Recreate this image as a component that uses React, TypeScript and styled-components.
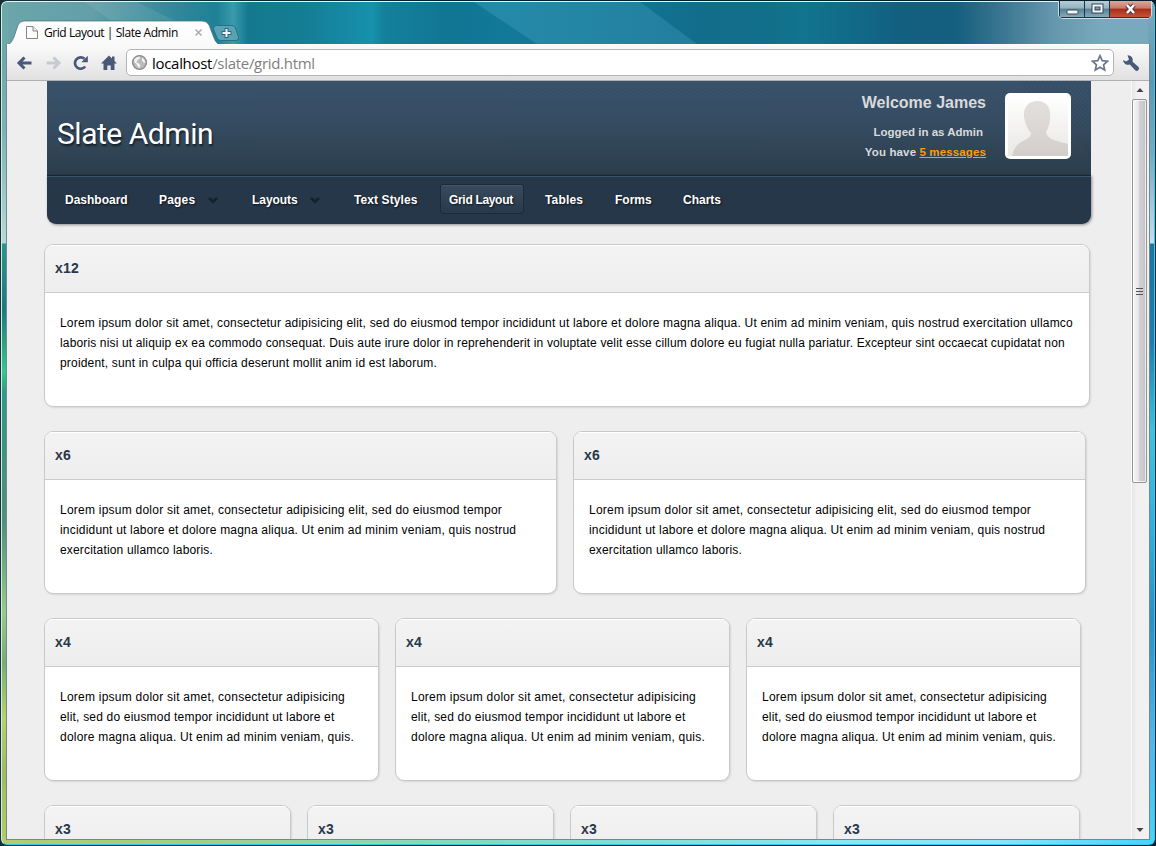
import React from "react";
import styled, { createGlobalStyle, css } from "styled-components";

const GlobalStyle = createGlobalStyle`
  * { box-sizing: border-box; }
  body { margin: 0; background: #06222c; overflow: hidden; }
`;

const Desktop = styled.div`
  width: 1156px;
  height: 846px;
  padding: 1px;
  background: linear-gradient(90deg, #12303a, #04202e 40%, #04202e);
  font-family: "Liberation Sans", Arial, sans-serif;
`;

const WindowFrame = styled.div`
  display: flex;
  flex-direction: column;
  height: 844px;
  padding: 0 5px 5px;
  border: 1px solid;
  border-color: #e4f6fa #27cdf2 #2fcdee #d6eee6;
  border-radius: 6px;
  background:
    linear-gradient(90deg, #b0ce68 0%, #a2d080 18%, #8fd8a8 32%, #86dcc8 50%, #8fe6f0 75%, #8ce2f8 87%, #45d6f2 100%) 0 100% / 100% 7px no-repeat,
    linear-gradient(180deg, #6ca8a8 0, #6eaaa8 60px, #7db4b2 130px, #b8d8d8 241px, #2a958a 242px, #1b7a7c 308px, #35c888 370px, #2f9a88 390px, #3c9480 440px, #4f9078 520px, #98cc86 610px, #78ad70 660px, #b8d268 715px, #a4ba5c 770px, #b4ce62 842px) 0 0 / 6px 100% no-repeat,
    linear-gradient(180deg, #7caabd 0, #5d9ab2 80px, #74aabf 150px, #c4e0ec 241px, #1d74a0 242px, #1f7dad 340px, #3cc4d8 430px, #34b0dc 520px, #2a90c8 620px, #55b4ec 740px, #45d6f2 842px) 100% 0 / 6px 100% no-repeat,
    linear-gradient(90deg, #6ca6aa 0, #629fa8 90px, #4a93a1 130px, #31879a 175px, #1f8097 215px, #3a9bae 231px, #14798f 246px, #147d93 300px, #168aa6 350px, #1592ad 370px, #14809a 383px, #117594 450px, #127998 500px, #127392 640px, #126d8b 700px, #126f8a 770px, #12748e 800px, #116a88 850px, #135f80 900px, #155f80 955px, #3a7690 1000px, #6496ad 1050px, #79a9bc 1100px);
`;

const TitleBar = styled.div`
  position: relative;
  display: flex;
  flex: 0 0 42px;
  align-items: flex-end;
`;

const Streaks = styled.svg`
  position: absolute;
  left: 0;
  top: 0;
`;

const Tab = styled.div`
  position: relative;
  display: flex;
  align-items: center;
  width: 210px;
  height: 25px;
  margin: 0 0 -1px 1px;
  padding: 0 15px 0 17px;
  font: 12px/24px "Open Sans", sans-serif;
  color: #000;
`;

const TabShape = styled.svg`
  position: absolute;
  left: 0;
  top: 0;
`;

const TabTitle = styled.span`
  position: relative;
  flex: 1;
  margin-left: 5px;
  letter-spacing: -0.43px;
  white-space: nowrap;
`;

const RelIcon = styled.svg`
  position: relative;
  flex: none;
`;

const NewTab = styled.svg`
  position: relative;
  flex: none;
  margin: 0 0 3px -6px;
`;

const WindowButtons = styled.div`
  position: absolute;
  right: -3px;
  top: -1px;
  display: flex;
  height: 18px;
  border: 1px solid #c9dde6;
  border-top: 0;
  border-radius: 0 0 5px 5px;
  overflow: hidden;
`;

const WindowButton = styled.div<{ $w: number; $danger?: boolean }>`
  display: flex;
  align-items: center;
  justify-content: center;
  width: ${p => p.$w}px;
  border-left: 1px solid #1d3442;
  border-bottom: 1px solid #1d3442;
  background: ${p =>
    p.$danger
      ? "linear-gradient(180deg, #dca79c 0, #c8796b 45%, #a92d16 50%, #c4543a 100%)"
      : "linear-gradient(180deg, #b8cdd6 0, #93b2bf 45%, #557f92 50%, #86abb9 100%)"};
`;

const BrowserWindow = styled.div`
  display: flex;
  flex-direction: column;
  flex: 1;
  min-height: 0;
  border: 1px solid #6f8a90;
  border-top: 0;
  margin: 0 -1px -1px -1px;
`;

const Toolbar = styled.div`
  display: flex;
  flex: 0 0 37px;
  align-items: center;
  padding: 0 8px 0 9px;
  border-top: 1px solid #fff;
  border-bottom: 1px solid #aeb0b4;
  background: linear-gradient(180deg, #fafafa, #e1e1e2);
`;

const NavIcon = styled.svg`
  flex: none;
  width: 18px;
  height: 18px;
  margin-right: 10px;
`;

const AddressBar = styled.div`
  display: flex;
  align-items: center;
  width: 988px;
  height: 27px;
  margin: 0 8px 0 -2px;
  padding: 0 4px;
  border: 1px solid #b3b4b8;
  border-radius: 5px;
  background: #fff;
`;

const Url = styled.span`
  flex: 1;
  margin-left: 4px;
  font: 15px/24px "Open Sans", sans-serif;
  letter-spacing: -0.3px;
  color: #000;
  span { color: #808080; }
`;

const Viewport = styled.div`
  display: flex;
  flex: 1;
  min-height: 0;
  background: #eee;
`;

const Page = styled.div`
  flex: 1;
  min-width: 0;
  padding-left: 37px;
  overflow: hidden;
`;

const Header = styled.header`
  width: 1044px;
  height: 143px;
  margin-left: 3px;
`;

const Banner = styled.div`
  display: flex;
  height: 94px;
  padding: 0 20px 0 10px;
  background:
    repeating-linear-gradient(45deg, rgba(10, 25, 40, 0.1) 0 1px, transparent 1px 2.83px),
    linear-gradient(180deg, #3a546d 0, #364c61 50%, #2b3e4c 100%);
`;

const Logo = styled.h1`
  flex: 1;
  margin: 33px 0 0;
  font: 400 30px/40px Roboto, sans-serif;
  letter-spacing: -0.47px;
  color: #fff;
  text-shadow: 1px 2px 2px rgba(0, 0, 0, 0.6);
`;

const Account = styled.div`
  display: flex;
  flex-direction: column;
  align-items: flex-end;
  margin: 12px 19px 0 0;
  font-weight: bold;
  font-size: 11.5px;
  line-height: 20px;
  color: #d8dadc;
`;

const Welcome = styled.strong`
  margin-bottom: 10px;
  font-size: 16px;
  line-height: 19px;
`;

const AccountLine = styled.span<{ $inset?: number; $spacing: number }>`
  margin-right: ${p => p.$inset || 0}px;
  letter-spacing: ${p => p.$spacing}px;
  a { color: #ff9a0a; text-decoration: underline; }
`;

const Avatar = styled.svg`
  flex: none;
  margin-top: 12px;
`;

const NavBar = styled.nav`
  display: flex;
  height: 49px;
  padding: 8px 9px 0;
  border-top: 1px solid #15242f;
  border-radius: 0 0 9px 9px;
  background: #27374a;
  box-shadow: inset 0 1px 0 #3a536b, 1px 1px 3px rgba(0, 0, 0, 0.4);
`;

const NavItem = styled.a<{ $w: number; $gap: number; $spacing?: number; $active?: boolean }>`
  display: flex;
  align-items: center;
  justify-content: space-between;
  width: ${p => p.$w}px;
  height: 30px;
  margin-right: ${p => p.$gap}px;
  padding: 2px 8px 0;
  border: 1px solid transparent;
  border-radius: 3px;
  font-weight: bold;
  font-size: 12px;
  letter-spacing: ${p => p.$spacing || 0}px;
  color: #fff;
  text-shadow: 1px 1px 2px rgba(0, 0, 0, 0.7);
  white-space: nowrap;
  ${p =>
    p.$active &&
    css`
      border-color: #1b2b3b;
      background: linear-gradient(180deg, #3a4b5d, #28394c);
      box-shadow: inset 0 1px 0 #435466;
    `}
`;

const MenuArrow = styled.svg`
  margin-right: 2px;
`;

const Grid = styled.main`
  display: flex;
  flex-direction: column;
  gap: 24px;
  margin-top: 20px;
`;

const Row = styled.div`
  display: flex;
  gap: 16px;
`;

const Card = styled.section<{ $w: number }>`
  flex: none;
  width: ${p => p.$w}px;
  height: 163px;
  border: 1px solid #c9c9c9;
  border-radius: 9px;
  background: #fff;
  box-shadow: 1px 1px 2px rgba(0, 0, 0, 0.1);
  overflow: hidden;
`;

const CardTitle = styled.h2`
  height: 48px;
  margin: 0;
  padding-left: 10px;
  border-bottom: 1px solid #ccc;
  background: linear-gradient(180deg, #f3f3f3, #eee);
  box-shadow: inset 0 1px 0 #fff;
  font-size: 14px;
  letter-spacing: 0.2px;
  line-height: 47px;
  color: #27384b;
`;

const CardText = styled.p`
  margin: 20px 0 0 15px;
  font-size: 12px;
  line-height: 20px;
  color: #000;
  white-space: nowrap;
`;

const TextLine = styled.span<{ $spacing: number }>`
  display: block;
  letter-spacing: ${p => p.$spacing}px;
`;

const Scrollbar = styled.div`
  display: flex;
  flex-direction: column;
  align-items: center;
  width: 18px;
  padding-right: 2px;
  border-left: 1px solid #fafafa;
  background: linear-gradient(90deg, #e6e6e6, #f1f1f1 30%, #f1f1f1);
`;

const ScrollArrow = styled.svg`
  flex: none;
  width: 16px;
  height: 18px;
`;

const Thumb = styled.div`
  display: flex;
  align-items: center;
  justify-content: center;
  width: 15px;
  height: 384px;
  margin-bottom: auto;
  border: 1px solid #949494;
  border-radius: 2px;
  background: linear-gradient(90deg, #f5f5f5 0, #e9e9eb 40%, #d2d2d6 50%, #c0c0c6 100%);
  box-shadow: inset 0 0 0 1px rgba(255, 255, 255, 0.7);
`;

type CardData = { title: string; width: number; lines: [string, number][] };

const sixLines: [string, number][] = [
  ["Lorem ipsum dolor sit amet, consectetur adipisicing elit, sed do eiusmod tempor", 0.235],
  ["incididunt ut labore et dolore magna aliqua. Ut enim ad minim veniam, quis nostrud", 0.195],
  ["exercitation ullamco laboris.", 0.17],
];
const fourLines: [string, number][] = [
  ["Lorem ipsum dolor sit amet, consectetur adipisicing", 0.24],
  ["elit, sed do eiusmod tempor incididunt ut labore et", 0.19],
  ["dolore magna aliqua. Ut enim ad minim veniam, quis.", 0.22],
];
const six: CardData = { title: "x6", width: 513, lines: sixLines };
const four: CardData = { title: "x4", width: 335, lines: fourLines };
const three: CardData = { title: "x3", width: 247, lines: [] };

const rows: CardData[][] = [
  [
    {
      title: "x12",
      width: 1046,
      lines: [
        ["Lorem ipsum dolor sit amet, consectetur adipisicing elit, sed do eiusmod tempor incididunt ut labore et dolore magna aliqua. Ut enim ad minim veniam, quis nostrud exercitation ullamco", 0.199],
        ["laboris nisi ut aliquip ex ea commodo consequat. Duis aute irure dolor in reprehenderit in voluptate velit esse cillum dolore eu fugiat nulla pariatur. Excepteur sint occaecat cupidatat non", 0.146],
        ["proident, sunt in culpa qui officia deserunt mollit anim id est laborum.", 0.18],
      ],
    },
  ],
  [six, six],
  [four, four, four],
  [three, three, three, three],
];

const navItems = [
  { label: "Dashboard", w: 81, gap: 13 },
  { label: "Pages", w: 80, gap: 13, menu: true, spacing: 0.2 },
  { label: "Layouts", w: 89, gap: 13, menu: true, spacing: -0.05 },
  { label: "Text Styles", w: 82, gap: 13, spacing: 0.1 },
  { label: "Grid Layout", w: 84, gap: 12, active: true, spacing: -0.32 },
  { label: "Tables", w: 57, gap: 13, spacing: 0.15 },
  { label: "Forms", w: 55, gap: 13 },
  { label: "Charts", w: 57, gap: 0 },
];

const ink = "#48587a";

export default function App() {
  return (
    <Desktop>
      <GlobalStyle />
      <WindowFrame>
        <TitleBar>
          <Streaks width="1142" height="42">
            <defs>
              <linearGradient id="beam" x1="0" x2="1" y1="0" y2="0">
                <stop offset="0" stopColor="#3aa0c0" stopOpacity=".45" />
                <stop offset="1" stopColor="#3a90b0" stopOpacity=".45" />
              </linearGradient>
            </defs>
            <path d="M467 0H633L690 42H530Z" fill="url(#beam)" />
            <path d="M78 0 106 20H170L130 0Z" fill="#fff" opacity=".08" />
          </Streaks>
          <Tab>
            <TabShape width="214" height="25">
              <defs>
                <linearGradient id="tabFill" x1="0" x2="0" y1="0" y2="1">
                  <stop offset="0" stopColor="#fff" />
                  <stop offset="1" stopColor="#fafafa" />
                </linearGradient>
              </defs>
              <path d="M-1 25C3 24 4 21 6 17L10 5Q12 1 16 1H194Q199 1 201 5L206 18Q208 24 213 25Z" fill="url(#tabFill)" stroke="#3f6f78" strokeOpacity=".7" />
              <path d="M0 25H213" stroke="#fafafa" strokeWidth="2" />
            </TabShape>
            <RelIcon width="14" height="15" viewBox="0 0 14 15">
              <path d="M1.5 1.5H8L12.5 6V13.5H1.5Z" fill="#fdfdfd" stroke="#858585" />
              <path d="M8 1.5V6H12.5" fill="#eee" stroke="#858585" />
            </RelIcon>
            <TabTitle>Grid Layout | Slate Admin</TabTitle>
            <RelIcon width="9" height="9" viewBox="0 0 9 9">
              <path d="M1.5 1.5 7.5 7.5M7.5 1.5 1.5 7.5" stroke="#aaa" strokeWidth="1.5" />
            </RelIcon>
          </Tab>
          <NewTab width="28" height="16" viewBox="0 0 28 16">
            <path d="M4.500.5H20Q22.500.5 23.500 3L26.500 12Q27 15.500 24 15.500H9Q6 15.500 5 13L1.500 4Q1 .5 4.500.5Z" fill="#5aa3b5" stroke="#2d6f82" />
            <path d="M14.500 3V13M9.500 8H19.500" stroke="#2f6880" strokeWidth="4" />
            <path d="M14.500 4V12M10.500 8H18.500" stroke="#e8f4f8" strokeWidth="2" />
          </NewTab>
          <WindowButtons>
            <WindowButton $w={25}>
              <svg width="13" height="12"><rect x="1" y="7" width="11" height="4" rx="1" fill="#f6f6f6" stroke="#3d4c5a" /></svg>
            </WindowButton>
            <WindowButton $w={25}>
              <svg width="13" height="12"><rect x="2.500" y="2.500" width="8" height="6" fill="none" stroke="#34465a" strokeWidth="4" /><rect x="2.500" y="2.500" width="8" height="6" fill="none" stroke="#f6f6f6" strokeWidth="2" /></svg>
            </WindowButton>
            <WindowButton $w={42} $danger>
              <svg width="13" height="12" viewBox="0 0 13 12"><path d="M3 2 10 10M10 2 3 10" stroke="#4a3a48" strokeWidth="4.500" /><path d="M3 2 10 10M10 2 3 10" stroke="#fff" strokeWidth="2.500" /></svg>
            </WindowButton>
          </WindowButtons>
        </TitleBar>
        <BrowserWindow>
          <Toolbar>
            <NavIcon viewBox="0 0 18 18">
              <path d="M8.500 3.500 3 9l5.500 5.500M3.500 9H15.500" fill="none" stroke={ink} strokeWidth="3" />
            </NavIcon>
            <NavIcon viewBox="0 0 18 18">
              <path d="M9.500 3.500 15 9l-5.500 5.500M14.500 9H2.500" fill="none" stroke="#c8cacf" strokeWidth="3" />
            </NavIcon>
            <NavIcon viewBox="0 0 18 18">
              <path d="M13.200 12.500A5.700 5.700 0 1 1 12.500 4.800" fill="none" stroke={ink} strokeWidth="2.700" />
              <path d="M15.800 1.800V8.300H9.300Z" fill={ink} />
            </NavIcon>
            <NavIcon viewBox="0 0 18 18">
              <path d="M9 1.500 1 9.500H3.500V16H7.300V11.500H10.700V16H14.500V9.500H17L14.500 7V2.500H12V4.500Z" fill={ink} />
            </NavIcon>
            <AddressBar>
              <svg width="17" height="17" viewBox="0 0 17 17">
                <circle cx="8.500" cy="8.500" r="6.900" fill="#bababa" stroke="#8b8b8b" strokeWidth="1.400" />
                <path d="M3.500 5 6 3l3-.3L8.500 5 6.500 6 5.500 8.500 8 9.500 9.500 11.500 8 14.500 6.500 12 5 9.500 3 8ZM11 3.500l2.500 2.500L14.500 9 12.500 8.500 11 6.500Z" fill="#f4f4f4" />
              </svg>
              <Url>localhost<span>/slate/grid.html</span></Url>
              <svg width="18" height="18" viewBox="0 0 18 18">
                <path d="M9 1.700 11.200 6.600 16.500 7.200 12.600 10.800 13.700 16 9 13.300 4.300 16 5.400 10.800 1.500 7.200 6.800 6.600Z" fill="#fff" stroke="#6b7690" strokeWidth="1.700" />
              </svg>
            </AddressBar>
            <svg width="18" height="18" viewBox="0 0 18 18">
              <path d="M5.500 1.200A5 5 0 0 1 10.600 7.700L16.300 12.800A2.300 2.300 0 0 1 13.200 16.200L7.800 10.500A5 5 0 0 1 1 6L4.200 7.600 7 5.500Z" fill={ink} />
            </svg>
          </Toolbar>
          <Viewport>
            <Page>
              <Header>
                <Banner>
                  <Logo>Slate Admin</Logo>
                  <Account>
                    <Welcome>Welcome James</Welcome>
                    <AccountLine $inset={3} $spacing={0}>Logged in as Admin</AccountLine>
                    <AccountLine $spacing={0.13}>You have <a>5 messages</a></AccountLine>
                  </Account>
                  <Avatar width="66" height="66" viewBox="0 0 66 66">
                    <defs>
                      <linearGradient id="photo" x1="0" x2="0" y1="0" y2="1">
                        <stop offset="0" stopColor="#fff" />
                        <stop offset="1" stopColor="#e9e7e5" />
                      </linearGradient>
                      <linearGradient id="person" x1="0" x2="0" y1="0" y2="1">
                        <stop offset="0" stopColor="#e2e0de" />
                        <stop offset="1" stopColor="#d3cecb" />
                      </linearGradient>
                    </defs>
                    <rect width="66" height="66" rx="5" fill="#fff" />
                    <rect x="3" y="3" width="60" height="60" fill="url(#photo)" />
                    <path d="M7 63C9 53 14 50 20 47C24 45 26 43 26 40C22 36 20 30 19 24C18 14 24 8 32 8C41 8 46 14 45 24C45 31 43 36 41 39C42 43 44 45 49 47C55 49 60 50 63 51V63Z" fill="url(#person)" />
                  </Avatar>
                </Banner>
                <NavBar>
                  {navItems.map(item => (
                    <NavItem key={item.label} $w={item.w} $gap={item.gap} $spacing={item.spacing} $active={item.active}>
                      {item.label}
                      {item.menu && (
                        <MenuArrow width="12" height="10" viewBox="0 0 12 10">
                          <path d="M2 3 6 6.700 10 3" fill="none" stroke="#152029" strokeWidth="2.800" />
                        </MenuArrow>
                      )}
                    </NavItem>
                  ))}
                </NavBar>
              </Header>
              <Grid>
                {rows.map((row, i) => (
                  <Row key={i}>
                    {row.map((card, j) => (
                      <Card key={j} $w={card.width}>
                        <CardTitle>{card.title}</CardTitle>
                        <CardText>
                          {card.lines.map(([text, spacing]) => (
                            <TextLine key={text} $spacing={spacing}>{text}</TextLine>
                          ))}
                        </CardText>
                      </Card>
                    ))}
                  </Row>
                ))}
              </Grid>
            </Page>
            <Scrollbar>
              <ScrollArrow viewBox="0 0 16 18"><path d="M4.500 11 8 7 11.500 11Z" fill="#444" /></ScrollArrow>
              <Thumb>
                <svg width="7" height="9"><path d="M0 1.500H7M0 4.500H7M0 7.500H7" stroke="#555" /></svg>
              </Thumb>
              <ScrollArrow viewBox="0 0 16 18"><path d="M4.500 7 8 11 11.500 7Z" fill="#444" /></ScrollArrow>
            </Scrollbar>
          </Viewport>
        </BrowserWindow>
      </WindowFrame>
    </Desktop>
  );
}
